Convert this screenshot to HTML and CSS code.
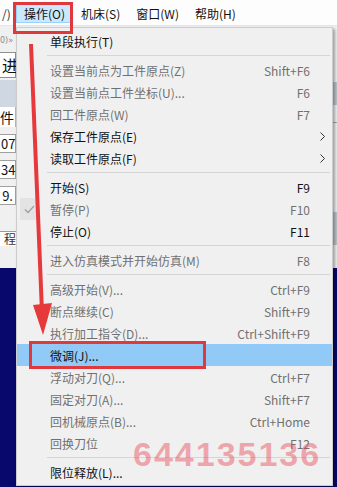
FILE: index.html
```html
<!DOCTYPE html>
<html lang="zh-CN">
<head>
    <meta charset="UTF-8">
    <title>操作菜单</title>
    <link rel="stylesheet" href="styles.css">
</head>
<body>
    <div class="menubar">
        <div class="bar-item cut">/)</div>
        <div class="bar-item active">操作(O)</div>
        <div class="bar-item">机床(S)</div>
        <div class="bar-item">窗口(W)</div>
        <div class="bar-item">帮助(H)</div>
    </div>

    <div class="workarea">
        <div class="upper">
            <div class="left-panel">
                <div class="lp-head">0)»</div>
                <div class="lp-input">进</div>
                <div class="lp-band"></div>
                <div class="lp-label">件</div>
                <div class="lp-cell">07.</div>
                <div class="lp-cell">34.</div>
                <div class="lp-cell right">9.</div>
                <div class="lp-gap"></div>
                <div class="lp-tab">程</div>
            </div>
            <div class="mid"></div>
            <div class="right-strip">
                <div class="rs-band"></div>
                <div class="rs-line"></div>
                <div class="rs-band low"></div>
            </div>
        </div>
        <div class="navy"></div>
    </div>

    <!-- 下拉菜单 -->
    <div class="dropdown">
        <div class="row"><span class="gutter"></span><span class="label">单段执行(T)</span><span class="key"></span><span class="sub"></span></div>
        <div class="sep"></div>
        <div class="row off"><span class="gutter"></span><span class="label">设置当前点为工件原点(Z)</span><span class="key">Shift+F6</span><span class="sub"></span></div>
        <div class="row off"><span class="gutter"></span><span class="label">设置当前点工件坐标(U)...</span><span class="key">F6</span><span class="sub"></span></div>
        <div class="row off"><span class="gutter"></span><span class="label">回工件原点(W)</span><span class="key">F7</span><span class="sub"></span></div>
        <div class="row"><span class="gutter"></span><span class="label">保存工件原点(E)</span><span class="key"></span><span class="sub"><svg width="5" height="9" viewBox="0 0 5 9"><polyline points="0.5,0.5 4.5,4.5 0.5,8.5" fill="none" stroke="#333" stroke-width="1"/></svg></span></div>
        <div class="row"><span class="gutter"></span><span class="label">读取工件原点(F)</span><span class="key"></span><span class="sub"><svg width="5" height="9" viewBox="0 0 5 9"><polyline points="0.5,0.5 4.5,4.5 0.5,8.5" fill="none" stroke="#333" stroke-width="1"/></svg></span></div>
        <div class="sep"></div>
        <div class="row"><span class="gutter"></span><span class="label">开始(S)</span><span class="key">F9</span><span class="sub"></span></div>
        <div class="row off"><span class="gutter"><span class="check"><svg width="11" height="9" viewBox="0 0 11 9"><polyline points="1,4.5 4,7.5 10,1" fill="none" stroke="#a0a0a0" stroke-width="1.3"/></svg></span></span><span class="label">暂停(P)</span><span class="key">F10</span><span class="sub"></span></div>
        <div class="row"><span class="gutter"></span><span class="label">停止(O)</span><span class="key">F11</span><span class="sub"></span></div>
        <div class="sep"></div>
        <div class="row off"><span class="gutter"></span><span class="label">进入仿真模式并开始仿真(M)</span><span class="key">F8</span><span class="sub"></span></div>
        <div class="sep"></div>
        <div class="row off"><span class="gutter"></span><span class="label">高级开始(V)...</span><span class="key">Ctrl+F9</span><span class="sub"></span></div>
        <div class="row off"><span class="gutter"></span><span class="label">断点继续(C)</span><span class="key">Shift+F9</span><span class="sub"></span></div>
        <div class="row off"><span class="gutter"></span><span class="label">执行加工指令(D)...</span><span class="key">Ctrl+Shift+F9</span><span class="sub"></span></div>
        <div class="row hot"><span class="gutter"></span><span class="label">微调(J)...</span><span class="key"></span><span class="sub"></span></div>
        <div class="row off"><span class="gutter"></span><span class="label">浮动对刀(Q)...</span><span class="key">Ctrl+F7</span><span class="sub"></span></div>
        <div class="row off"><span class="gutter"></span><span class="label">固定对刀(A)...</span><span class="key">Shift+F7</span><span class="sub"></span></div>
        <div class="row off"><span class="gutter"></span><span class="label">回机械原点(B)...</span><span class="key">Ctrl+Home</span><span class="sub"></span></div>
        <div class="row off"><span class="gutter"></span><span class="label">回换刀位</span><span class="key">F12</span><span class="sub"></span></div>
        <div class="sep"></div>
        <div class="row"><span class="gutter"></span><span class="label">限位释放(L)...</span><span class="key"></span><span class="sub"></span></div>
    </div>

    <!-- 标注 -->
    <div class="mark mark-menu"></div>
    <div class="mark mark-item"></div>
    <svg class="arrow" width="337" height="487" viewBox="0 0 337 487">
        <line x1="31" y1="44" x2="42" y2="312" stroke="#e5393c" stroke-width="4"/>
        <polygon points="33,305 52,303 43,335" fill="#e5393c"/>
    </svg>
    <div class="watermark">644135136</div>
</body>
</html>
```

FILE: styles.css
```css
body {
    margin: 0;
    width: 337px;
    height: 487px;
    overflow: hidden;
    position: relative;
    background: #f0f0f0;
    font-family: "Noto Sans CJK SC", "Noto Sans", sans-serif;
    font-size: 12px;
    color: #111;
}
.menubar {
    height: 26px;
    display: flex;
    align-items: center;
    background: #fdfdfd;
    box-sizing: border-box;
    border-bottom: 1px solid #e6e6e6;
}
.bar-item {
    height: 21px;
    line-height: 21px;
    padding: 0 7px;
    box-sizing: border-box;
    border: 1px solid transparent;
}
.bar-item.cut {
    width: 16px;
    padding: 0 0 0 1px;
    overflow: hidden;
    color: #333;
}
.bar-item.active {
    background: #cce8ff;
    border-color: #99d1ff;
}
.workarea {
    height: 461px;
    display: flex;
    flex-direction: column;
}
.upper {
    height: 242px;
    display: flex;
}
.left-panel {
    width: 16px;
    display: flex;
    flex-direction: column;
    overflow: hidden;
    background: #f0f0f0;
}
.lp-head {
    height: 26px;
    box-sizing: border-box;
    padding-top: 10px;
    font-size: 8px;
    color: #8a8a8a;
    font-family: "DejaVu Sans", sans-serif;
}
.lp-input {
    height: 26px;
    box-sizing: border-box;
    background: #fff;
    border: 1px solid #8e8f8f;
    border-left: none;
    font-size: 16px;
    line-height: 24px;
    padding-left: 2px;
}
.lp-band {
    height: 27px;
    margin-top: 2px;
    background: #cfd8e2;
}
.lp-label {
    height: 20px;
    background: #fff;
    font-size: 14px;
    line-height: 20px;
    border-right: 1px solid #b5b5b5;
}
.lp-cell {
    height: 19px;
    margin-top: 7px;
    box-sizing: border-box;
    background: #fff;
    border: 1px solid #a0a0a0;
    border-left: none;
    font-size: 13px;
    line-height: 17px;
    padding-left: 1px;
}
.lp-cell.right {
    text-align: right;
    padding-right: 2px;
}
.lp-gap {
    height: 22px;
    background: #f0f0f0;
}
.lp-tab {
    height: 14px;
    margin-top: 4px;
    background: #fff;
    border-top: 1px solid #9a9a9a;
    font-size: 12px;
    line-height: 14px;
    padding-left: 4px;
    color: #333;
}
.mid {
    flex: 1;
}
.right-strip {
    width: 4px;
    display: flex;
    flex-direction: column;
}
.rs-band {
    height: 23px;
    margin-top: 56px;
    background: #bcc4cc;
}
.rs-line {
    height: 1px;
    margin-top: 17px;
    background: #a8a8a8;
}
.rs-band.low {
    height: 33px;
    margin-top: 89px;
}
.navy {
    flex: 1;
    background: #07076c;
}
/* 下拉菜单 */
.dropdown {
    position: absolute;
    left: 16px;
    top: 27px;
    width: 317px;
    height: 459px;
    box-sizing: border-box;
    padding: 2px 0;
    background: #f0f0f0;
    border: 1px solid #cccccc;
    box-shadow: 2px 2px 3px rgba(0, 0, 0, 0.35);
}
.row {
    height: 22px;
    display: flex;
    align-items: center;
    white-space: nowrap;
}
.row.off {
    color: #707070;
}
.row.hot {
    background: #91c9f7;
}
.gutter {
    width: 33px;
    height: 22px;
    flex: none;
    display: flex;
    align-items: center;
}
.check {
    width: 19px;
    height: 22px;
    margin-left: 3px;
    background: #e3e3e3;
    display: flex;
    align-items: center;
    justify-content: center;
}
.label {
    flex: 1;
}
.key {
    text-align: right;
}
.sub {
    width: 20px;
    flex: none;
    display: flex;
    justify-content: center;
    padding-left: 2px;
}
.sep {
    height: 1px;
    margin: 3px 2px 3px 30px;
    background: #d5d5d5;
}
/* 标注 */
.mark {
    position: absolute;
    border: 3px solid #e0393d;
    box-sizing: border-box;
}
.mark-menu {
    left: 13px;
    top: 2px;
    width: 60px;
    height: 32px;
}
.mark-item {
    left: 29px;
    top: 341px;
    width: 177px;
    height: 28px;
}
.arrow {
    position: absolute;
    left: 0;
    top: 0;
    pointer-events: none;
}
.watermark {
    position: absolute;
    left: 133px;
    top: 435px;
    font-family: "Liberation Sans", sans-serif;
    font-weight: bold;
    font-size: 34px;
    letter-spacing: 2px;
    color: rgba(232, 60, 72, 0.42);
    pointer-events: none;
}
```
